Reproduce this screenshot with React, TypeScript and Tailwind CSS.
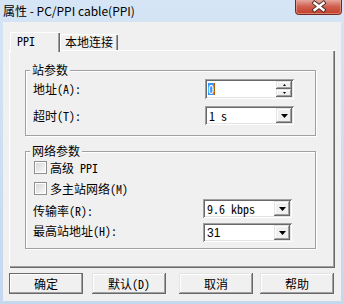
import React from "react";

const raised =
  "shadow-[inset_-1px_-1px_0_#696969,inset_1px_1px_0_#e3e3e3,inset_-2px_-2px_0_#a0a0a0,inset_2px_2px_0_#ffffff]";
const sunken =
  "shadow-[inset_1px_1px_0_#a0a0a0,inset_-1px_-1px_0_#ffffff,inset_2px_2px_0_#696969,inset_-2px_-2px_0_#e3e3e3]";

function DownArrow() {
  return (
    <svg width="7" height="4" viewBox="0 0 7 4">
      <path d="M0 0H7L3.5 4Z" fill="#000" />
    </svg>
  );
}

function Combo({ text, w, sans }: { text: string; w: string; sans?: boolean }) {
  return (
    <div className={`${w} h-[19px] bg-white ${sunken} flex items-stretch p-[2px]`}>
      <div
        className={`flex-1 flex items-center pl-[2px] text-[12px] leading-none ${
          sans ? "font-['Liberation_Sans',sans-serif] text-[11px]" : ""
        }`}
      >
        {text}
      </div>
      <div className={`w-[16px] bg-[#f0f0f0] ${raised} flex items-center justify-center`}>
        <DownArrow />
      </div>
    </div>
  );
}

function SpinEdit() {
  return (
    <div className={`w-[89px] h-[20px] bg-white ${sunken} flex items-stretch p-[2px]`}>
      <div className="flex-1 flex items-center pl-[1px]">
        <span className="bg-[#3399ff] text-white text-[12px] leading-[12px] h-[12px] w-[6px] flex items-center justify-center">
          0
        </span>
        <span className="w-[1px] h-[12px] bg-[#c05a00]" />
      </div>
      <div className="w-[16px] flex flex-col justify-between">
        <div className={`h-[8px] bg-[#f0f0f0] ${raised} flex items-center justify-center`}>
          <svg width="3" height="2" viewBox="0 0 3 2">
            <path d="M1.5 0L3 2H0Z" fill="#000" />
          </svg>
        </div>
        <div className={`h-[8px] bg-[#f0f0f0] ${raised} flex items-center justify-center`}>
          <svg width="3" height="2" viewBox="0 0 3 2">
            <path d="M0 0H3L1.5 2Z" fill="#000" />
          </svg>
        </div>
      </div>
    </div>
  );
}

function Check({ label }: { label: string }) {
  return (
    <div className="h-[13px] flex items-center gap-[3px]">
      <div className="w-[13px] h-[13px] border border-[#8e8f8f] bg-white p-[1px]">
        <div className="w-full h-full bg-gradient-to-br from-[#d8d8d8] to-[#f8f8f8]" />
      </div>
      <span className="text-[12px] leading-[14px]">{label}</span>
    </div>
  );
}

function Group({
  title,
  h,
  children,
  className = "",
}: {
  title: string;
  h: string;
  children: React.ReactNode;
  className?: string;
}) {
  return (
    <div
      className={`relative w-[291px] ${h} border border-[#a0a0a0] shadow-[inset_1px_1px_0_#ffffff,1px_1px_0_#ffffff] ${className}`}
    >
      <span className="absolute -top-[8px] left-[4px] px-[2px] bg-[#f0f0f0] text-[12px] leading-[14px]">
        {title}
      </span>
      {children}
    </div>
  );
}

function Btn({ label, def, className = "" }: { label: string; def?: boolean; className?: string }) {
  return (
    <div
      className={`w-[74px] h-[21px] bg-[#f0f0f0] ${raised} ${
        def ? "outline outline-1 outline-[#696969] -outline-offset-1" : ""
      } flex items-center justify-center text-[12px] ${className}`}
    >
      {label}
    </div>
  );
}

export default function App() {
  return (
    <div className="w-[344px] h-[304px] overflow-hidden flex flex-col bg-gradient-to-b from-[#d6e5f5] to-[#c4d8ee] font-['Noto_Sans_Mono_CJK_SC','Noto_Sans_CJK_SC',monospace] text-black">
      {/* title bar */}
      <div className="h-[22px] flex items-start shrink-0">
        <span className="pl-[3px] pt-[4px] text-[12px] leading-[14px] font-['Noto_Sans_CJK_SC','Noto_Sans',sans-serif] text-black">
          属性 - PC/PPI cable(PPI)
        </span>
        <div className="ml-auto mr-[2px]">
          <svg width="47" height="15" viewBox="0 0 47 15">
            <defs>
              <linearGradient id="cb" x1="0" y1="0" x2="0" y2="1">
                <stop offset="0" stopColor="#e6a79c" />
                <stop offset="0.45" stopColor="#d06050" />
                <stop offset="1" stopColor="#c23b26" />
              </linearGradient>
            </defs>
            <path
              d="M0.5 0V11.5Q0.5 14.5 3.5 14.5H43.5Q46.5 14.5 46.5 11.5V0"
              fill="url(#cb)"
              stroke="#6e2a20"
            />
            <path d="M1.5 0V11Q1.5 13.5 4 13.5H43Q45.5 13.5 45.5 11V0" fill="none" stroke="#eaa89c" strokeOpacity="0.6" />
            <g transform="translate(24 6.5)">
              <path d="M-4.5 -3.5L4.5 3.5M4.5 -3.5L-4.5 3.5" stroke="#4a2a26" strokeWidth="4.2" strokeLinecap="square" />
              <path d="M-4.5 -3.5L4.5 3.5M4.5 -3.5L-4.5 3.5" stroke="#ffffff" strokeWidth="2.4" strokeLinecap="square" />
            </g>
          </svg>
        </div>
      </div>

      {/* client area */}
      <div className="flex-1 mx-[3px] mb-[3px] bg-[#f0f0f0] flex flex-col pl-[6px] pt-[10px]">
        {/* tabs */}
        <div className="flex items-end pl-[1px] h-[18px]">
          <div className="relative z-10 -mb-[2px] w-[50px] h-[20px] bg-[#f0f0f0] shadow-[inset_1px_1px_0_#ffffff,inset_-1px_0_0_#696969,inset_-2px_0_0_#a0a0a0] pl-[7px] pt-[2px] text-[12px] leading-[14px]">
            PPI
          </div>
          <div className="w-[58px] h-[16px] shadow-[inset_1px_1px_0_#ffffff,inset_-1px_0_0_#696969,inset_-2px_0_0_#a0a0a0] flex items-center justify-center text-[12px] leading-[14px]">
            本地连接
          </div>
        </div>

        {/* panel */}
        <div className="w-[326px] h-[218px] shadow-[inset_1px_1px_0_#ffffff,inset_-1px_-1px_0_#696969,inset_-2px_-2px_0_#a0a0a0] pl-[16px] pt-[20px] flex flex-col">
          <Group title="站参数" h="h-[66px]">
            <div className="pl-[7px] pr-[21px] pt-[8px] flex flex-col">
              <div className="h-[20px] flex items-center justify-between">
                <span className="text-[12px] leading-[14px]">地址(A):</span>
                <SpinEdit />
              </div>
              <div className="mt-[7px] h-[19px] flex items-center justify-between">
                <span className="text-[12px] leading-[14px]">超时(T):</span>
                <Combo text="1 s" w="w-[89px]" />
              </div>
            </div>
          </Group>

          <Group title="网络参数" h="h-[98px]" className="mt-[15px]">
            <div className="pl-[8px] pr-[23px] pt-[9px] flex flex-col">
              <Check label="高级 PPI" />
              <div className="mt-[8px]">
                <Check label="多主站网络(M)" />
              </div>
              <div className="mt-[4px] h-[19px] flex items-start justify-between -ml-[1px]">
                <span className="pt-[5px] text-[12px] leading-[14px]">传输率(R):</span>
                <Combo text="9.6 kbps" w="w-[89px]" />
              </div>
              <div className="mt-[5px] h-[19px] flex items-start justify-between -ml-[1px]">
                <span className="pt-[1px] text-[12px] leading-[14px]">最高站地址(H):</span>
                <Combo text="31" w="w-[89px]" sans />
              </div>
            </div>
          </Group>
        </div>

        {/* buttons */}
        <div className="mt-[5px] flex">
          <Btn label="确定" def />
          <Btn label="默认(D)" className="ml-[9px]" />
          <Btn label="取消" className="ml-[13px]" />
          <Btn label="帮助" className="ml-[7px]" />
        </div>
      </div>
    </div>
  );
}
